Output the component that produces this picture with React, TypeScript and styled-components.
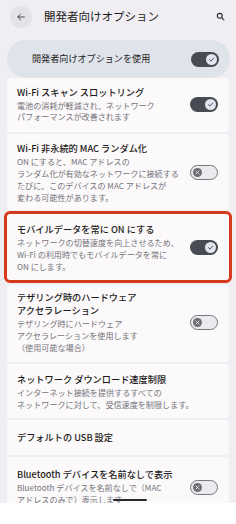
import React from "react";
import styled, { createGlobalStyle } from "styled-components";

const Global = createGlobalStyle`
  html, body { margin: 0; padding: 0; background: #ffffff; }
  body { font-family: "Noto Sans CJK JP", "Noto Sans", sans-serif; -webkit-font-smoothing: antialiased; }
  * { box-sizing: border-box; }
`;

const Screen = styled.div`
  position: relative;
  width: 236px;
  height: 503px;
  overflow: hidden;
  background: #f0eef2;
`;

const Header = styled.div`
  display: flex;
  align-items: center;
  height: 33px;
  padding: 0 9px 0 10px;
`;

const BackButton = styled.div`
  width: 22px;
  height: 22px;
  border-radius: 50%;
  background: #e4e2e6;
  display: flex;
  align-items: center;
  justify-content: center;
`;

const Title = styled.div`
  margin-left: 12px;
  flex: 1;
  font-size: 11.5px;
  color: #1d1b20;
  line-height: 1;
`;

const SearchIcon = styled.div`
  width: 14px;
  height: 14px;
  display: flex;
  align-items: center;
  justify-content: center;
`;

const MainCard = styled.div`
  margin: 7px 6px 0 7px;
  height: 38px;
  border-radius: 19px;
  background: #dfe3ea;
  display: flex;
  align-items: center;
  justify-content: space-between;
  padding: 0 11px 0 25px;
`;

const MainLabel = styled.div`
  font-size: 9.1px;
  color: #1d1b20;
  line-height: 1;
`;

const List = styled.div`
  display: flex;
  flex-direction: column;
  gap: 2px;
  margin: 0 7px;
`;

const Card = styled.div<{ $highlight?: boolean; $pt: number; $pb: number }>`
  background: #fbf9fa;
  border-radius: 3px;
  display: flex;
  align-items: center;
  justify-content: space-between;
  padding: ${(p) => p.$pt}px 11px ${(p) => p.$pb}px 10px;
  ${(p) =>
    p.$highlight
      ? "outline: 3px solid #d63a1c; outline-offset: 0; margin: 2px 0 3px; position: relative; z-index: 1;"
      : ""}
`;

const TextCol = styled.div`
  display: flex;
  flex-direction: column;
`;

const ItemTitle = styled.div`
  font-size: 9.2px;
  font-weight: 500;
  color: #1d1b20;
  line-height: 13px;
  white-space: nowrap;
`;

const SubBlock = styled.div`
  margin-top: 1px;
`;

const ItemSub = styled.div`
  font-size: 8.1px;
  color: #74737a;
  line-height: 11.7px;
  white-space: nowrap;
`;

const Track = styled.div<{ $on: boolean }>`
  flex: none;
  width: 28px;
  height: 15px;
  border-radius: 8px;
  display: flex;
  align-items: center;
  padding: 0 2px;
  justify-content: ${(p) => (p.$on ? "flex-end" : "flex-start")};
  background: ${(p) => (p.$on ? "#474b53" : "#eceaef")};
  border: ${(p) => (p.$on ? "none" : "1.3px solid #77767c")};
`;

const Thumb = styled.div<{ $on: boolean }>`
  width: ${(p) => (p.$on ? 11 : 9)}px;
  height: ${(p) => (p.$on ? 11 : 9)}px;
  border-radius: 50%;
  background: ${(p) => (p.$on ? "#e3e5ee" : "#6e6e74")};
  display: flex;
  align-items: center;
  justify-content: center;
`;

const NavHandle = styled.div`
  position: absolute;
  left: 113px;
  top: 499px;
  width: 34px;
  height: 2px;
  border-radius: 1px;
  background: #2a2a2e;
`;

const Toggle = ({ on }: { on: boolean }) => (
  <Track $on={on}>
    <Thumb $on={on}>
      {on ? (
        <svg width="7" height="7" viewBox="0 0 10 10">
          <path d="M2 5.2 L4.2 7.3 L8 3" fill="none" stroke="#3a4660" strokeWidth="1.3" strokeLinecap="round" strokeLinejoin="round" />
        </svg>
      ) : (
        <svg width="5" height="5" viewBox="0 0 10 10">
          <path d="M2 2 L8 8 M8 2 L2 8" stroke="#e8e6ea" strokeWidth="1.8" strokeLinecap="round" />
        </svg>
      )}
    </Thumb>
  </Track>
);

type Item = {
  title: string[];
  sub: string[];
  toggle?: boolean;
  highlight?: boolean;
  pt: number;
  pb: number;
};

const items: Item[] = [
  { title: ["Wi-Fi スキャン スロットリング"], sub: ["電池の消耗が軽減され、ネットワーク", "パフォーマンスが改善されます"], toggle: true, pt: 7.5, pb: 9 },
  {
    title: ["Wi-Fi 非永続的 MAC ランダム化"],
    sub: ["ON にすると、MAC アドレスの", "ランダム化が有効なネットワークに接続する", "たびに、このデバイスの MAC アドレスが", "変わる可能性があります。"],
    toggle: false,
    pt: 8.5,
    pb: 6.7,
  },
  {
    title: ["モバイルデータを常に ON にする"],
    sub: ["ネットワークの切替速度を向上させるため、", "Wi-Fi の利用時でもモバイルデータを常に", "ON にします。"],
    toggle: true,
    highlight: true,
    pt: 9.5,
    pb: 7.4,
  },
  {
    title: ["テザリング時のハードウェア", "アクセラレーション"],
    sub: ["テザリング時にハードウェア", "アクセラレーションを使用します", "（使用可能な場合）"],
    toggle: false,
    pt: 6.5,
    pb: 8.4,
  },
  {
    title: ["ネットワーク ダウンロード速度制限"],
    sub: ["インターネット接続を提供するすべての", "ネットワークに対して、受信速度を制限します。"],
    pt: 9.5,
    pb: 7.1,
  },
  { title: ["デフォルトの USB 設定"], sub: [], pt: 11, pb: 11 },
  {
    title: ["Bluetooth デバイスを名前なしで表示"],
    sub: ["Bluetooth デバイスを名前なしで（MAC", "アドレスのみで）表示します"],
    toggle: false,
    pt: 11.5,
    pb: 12,
  },
];

export default function App() {
  return (
    <>
      <Global />
      <Screen>
        <Header>
          <BackButton>
            <svg width="10" height="10" viewBox="0 0 24 24">
              <path d="M20 12H5 M11 5l-7 7 7 7" fill="none" stroke="#45454a" strokeWidth="2.4" strokeLinecap="round" strokeLinejoin="round" />
            </svg>
          </BackButton>
          <Title>開発者向けオプション</Title>
          <SearchIcon>
            <svg width="9" height="9" viewBox="0 0 24 24">
              <circle cx="10" cy="10" r="6.5" fill="none" stroke="#2b2b30" strokeWidth="3" />
              <path d="M15 15l6 6" stroke="#2b2b30" strokeWidth="3" strokeLinecap="round" />
            </svg>
          </SearchIcon>
        </Header>
        <MainCard>
          <MainLabel>開発者向けオプションを使用</MainLabel>
          <Toggle on />
        </MainCard>
        <List>
          {items.map((it, i) => (
            <Card key={i} $highlight={it.highlight} $pt={it.pt} $pb={it.pb}>
              <TextCol>
                {it.title.map((t, j) => (
                  <ItemTitle key={j}>{t}</ItemTitle>
                ))}
                {it.sub.length > 0 && (
                  <SubBlock>
                    {it.sub.map((s, j) => (
                      <ItemSub key={j}>{s}</ItemSub>
                    ))}
                  </SubBlock>
                )}
              </TextCol>
              {it.toggle !== undefined && <Toggle on={it.toggle} />}
            </Card>
          ))}
        </List>
        <NavHandle />
      </Screen>
    </>
  );
}
